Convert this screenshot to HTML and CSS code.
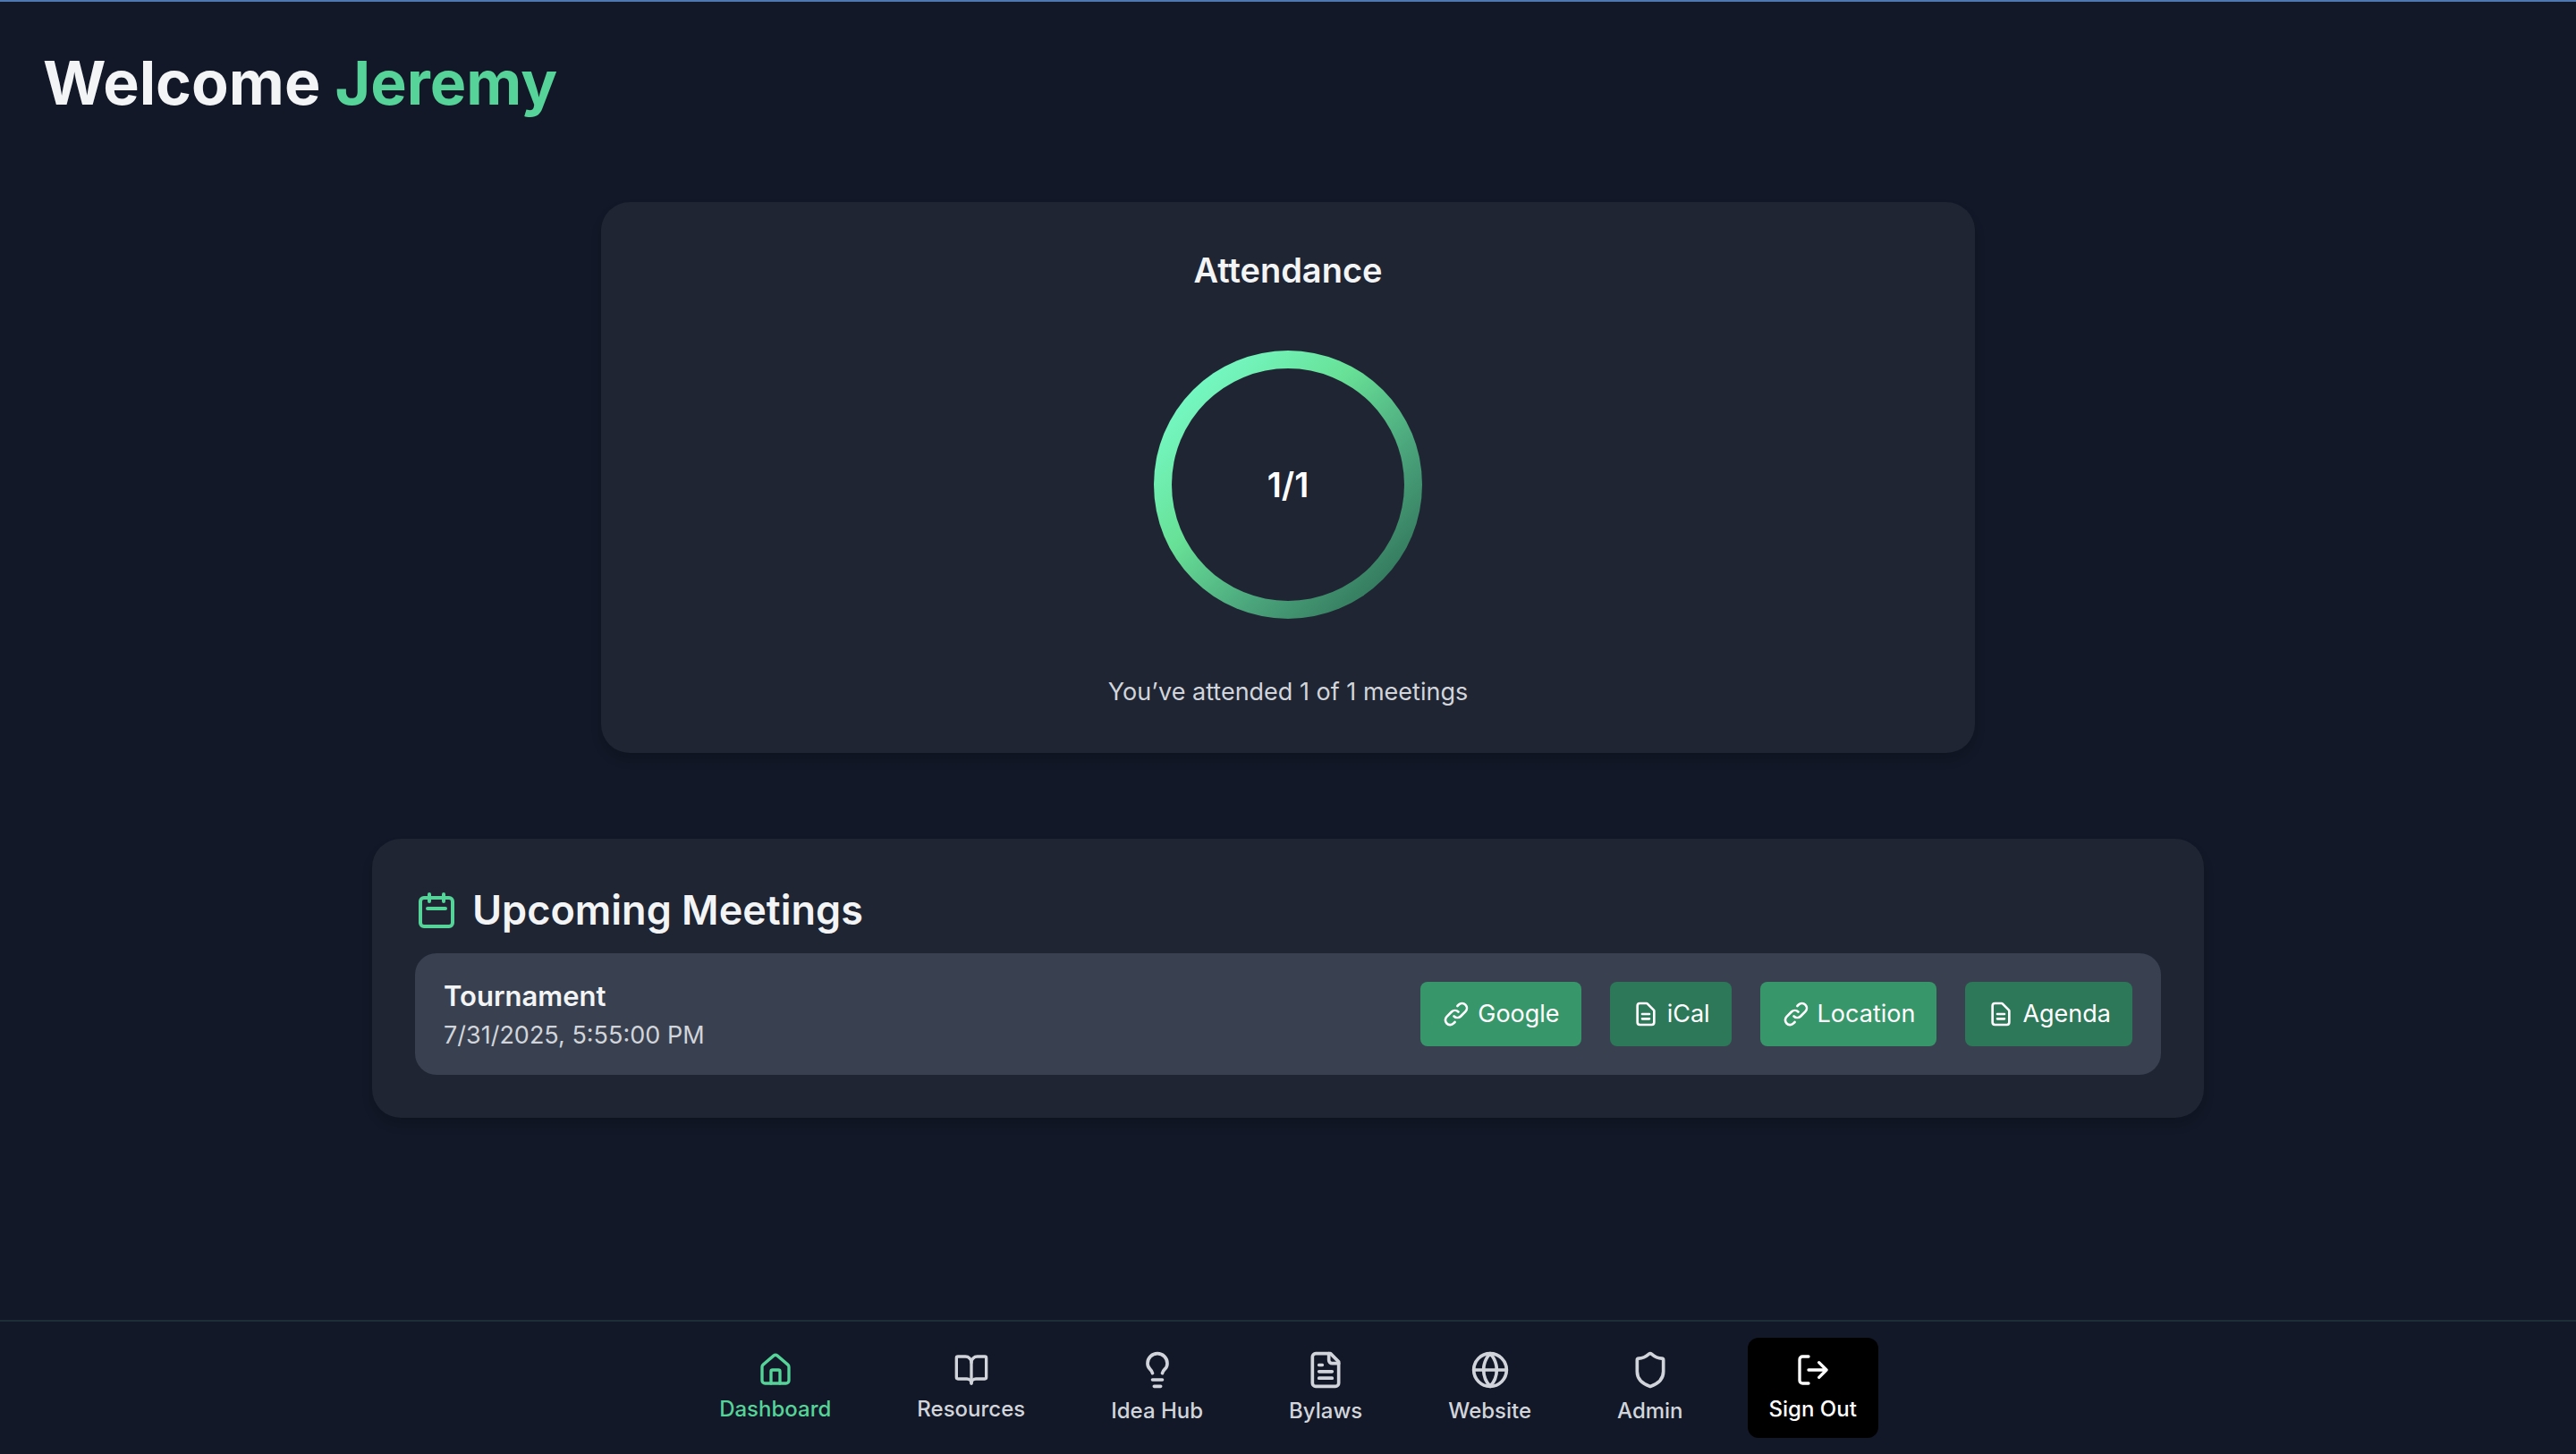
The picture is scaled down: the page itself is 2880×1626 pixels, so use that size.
FILE: index.html
```html
<!DOCTYPE html>
<html lang="en">
<head>
<meta charset="utf-8">
<title>Dashboard</title>
<link rel="stylesheet" href="styles.css">
</head>
<body>
<svg class="sprite" aria-hidden="true">
  <symbol id="link" viewBox="0 0 24 24"><path d="M13.828 10.172a4 4 0 0 0-5.656 0l-4 4a4 4 0 1 0 5.656 5.656l1.102-1.101m-.758-4.899a4 4 0 0 0 5.656 0l4-4a4 4 0 0 0-5.656-5.656l-1.100 1.100"/></symbol>
  <symbol id="doc" viewBox="0 0 24 24"><path d="M9 12h6m-6 4h6m2 5H7a2 2 0 0 1-2-2V5a2 2 0 0 1 2-2h5.586a1 1 0 0 1 .707.293l5.414 5.414a1 1 0 0 1 .293.707V19a2 2 0 0 1-2 2z"/></symbol>
</svg>
<main class="page">
  <h1 class="welcome">Welcome <span class="name">Jeremy</span></h1>

  <section class="card attendance">
    <h2 class="attendance-title">Attendance</h2>
    <div class="ring"><span class="ring-value">1/1</span></div>
    <p class="attendance-note">You’ve attended 1 of 1 meetings</p>
  </section>

  <section class="card meetings">
    <h2 class="meetings-title">
      <svg class="icon calendar" viewBox="0 0 24 24"><path d="M8 7V3m8 4V3m-9 8h10M5 21h14a2 2 0 0 0 2-2V7a2 2 0 0 0-2-2H5a2 2 0 0 0-2 2v12a2 2 0 0 0 2 2z"/></svg>
      Upcoming Meetings
    </h2>
    <div class="meeting">
      <div class="meeting-info">
        <h3 class="meeting-name">Tournament</h3>
        <p class="meeting-date">7/31/2025, 5:55:00 PM</p>
      </div>
      <div class="actions">
        <a class="action" href="#"><svg class="icon small"><use href="#link"/></svg>Google</a>
        <a class="action dark" href="#"><svg class="icon small"><use href="#doc"/></svg>iCal</a>
        <a class="action" href="#"><svg class="icon small"><use href="#link"/></svg>Location</a>
        <a class="action dark" href="#"><svg class="icon small"><use href="#doc"/></svg>Agenda</a>
      </div>
    </div>
  </section>
</main>

<nav class="nav">
  <a class="nav-item active" href="#"><svg class="icon medium" viewBox="0 0 24 24"><path d="M15 21v-8a1 1 0 0 0-1-1h-4a1 1 0 0 0-1 1v8"/><path d="M3 10a2 2 0 0 1 .709-1.528l7-5.999a2 2 0 0 1 2.582 0l7 5.999A2 2 0 0 1 21 10v9a2 2 0 0 1-2 2H5a2 2 0 0 1-2-2z"/></svg>Dashboard</a>
  <a class="nav-item" href="#"><svg class="icon medium" viewBox="0 0 24 24"><path d="M12 7v14"/><path d="M3 18a1 1 0 0 1-1-1V4a1 1 0 0 1 1-1h5a4 4 0 0 1 4 4 4 4 0 0 1 4-4h5a1 1 0 0 1 1 1v13a1 1 0 0 1-1 1h-6a3 3 0 0 0-3 3 3 3 0 0 0-3-3z"/></svg>Resources</a>
  <a class="nav-item" href="#"><svg class="icon" viewBox="0 0 24 24"><path d="M15 14c.2-1 .7-1.700 1.500-2.500 1-.9 1.500-2.200 1.500-3.500A6 6 0 0 0 6 8c0 1 .2 2.200 1.500 3.500.7.700 1.300 1.500 1.500 2.500M9 18h6M10 22h4"/></svg>Idea Hub</a>
  <a class="nav-item" href="#"><svg class="icon" viewBox="0 0 24 24"><path d="M15 2H6a2 2 0 0 0-2 2v16a2 2 0 0 0 2 2h12a2 2 0 0 0 2-2V7z"/><path d="M14 2v4a2 2 0 0 0 2 2h4M10 9H8M16 13H8M16 17H8"/></svg>Bylaws</a>
  <a class="nav-item" href="#"><svg class="icon" viewBox="0 0 24 24"><circle cx="12" cy="12" r="10"/><path d="M12 2a14.500 14.500 0 0 0 0 20 14.500 14.500 0 0 0 0-20M2 12h20"/></svg>Website</a>
  <a class="nav-item" href="#"><svg class="icon" viewBox="0 0 24 24"><path d="M20 13c0 5-3.500 7.500-7.660 8.950a1 1 0 0 1-.67-.01C7.500 20.500 4 18 4 13V6a1 1 0 0 1 1-1c2 0 4.500-1.200 6.240-2.720a1.170 1.170 0 0 1 1.520 0C14.510 3.810 17 5 19 5a1 1 0 0 1 1 1z"/></svg>Admin</a>
  <button class="nav-item sign-out" type="button"><svg class="icon medium" viewBox="0 0 24 24"><path d="M9 21H5a2 2 0 0 1-2-2V5a2 2 0 0 1 2-2h4M16 17l5-5-5-5M21 12H9"/></svg>Sign Out</button>
</nav>
</body>
</html>
```
FILE: styles.css
```css
* { box-sizing: border-box; margin: 0; }
body {
  min-height: 100vh;
  display: flex;
  flex-direction: column;
  background: #121827;
  border-top: 2px solid #4f77b0;
  color: #f3f4f6;
  font-family: Inter, "Liberation Sans", sans-serif;
}
a { color: inherit; text-decoration: none; }
.sprite { display: none; }
.icon {
  width: 44px;
  height: 44px;
  flex: none;
  fill: none;
  stroke: currentColor;
  stroke-width: 2;
  stroke-linecap: round;
  stroke-linejoin: round;
}
.icon.small { width: 32px; height: 32px; }
.icon.medium { width: 40px; height: 40px; }
.icon.calendar { width: 48px; height: 48px; color: #56d398; }

.page { flex: 1; display: flex; flex-direction: column; padding: 48px; }
.welcome { font-size: 68px; line-height: 84px; font-weight: 700; }
.name { color: #56d398; }

.card {
  width: 100%;
  align-self: center;
  padding: 48px;
  background: #1f2533;
  border-radius: 32px;
  box-shadow: 0 8px 12px rgba(0, 0, 0, .15);
}
.attendance {
  max-width: 1536px;
  margin-top: 92px;
  display: flex;
  flex-direction: column;
  align-items: center;
  gap: 62px;
}
.attendance-title { font-size: 38px; line-height: 56px; font-weight: 600; }
.ring {
  width: 300px;
  height: 300px;
  border-radius: 50%;
  border: 20px solid transparent;
  display: grid;
  place-items: center;
  background:
    linear-gradient(#1f2533, #1f2533) padding-box,
    linear-gradient(135deg, #76fbc9 10%, #68e197 40%, #4ba57c 65%, #31745a 90%) border-box;
}
.ring-value { color: #fff; font-size: 38px; line-height: 56px; font-weight: 600; }
.attendance-note { color: #d1d5db; font-size: 27px; line-height: 40px; }

.meetings { max-width: 2048px; margin-top: 96px; }
.meetings-title {
  display: flex;
  align-items: center;
  gap: 16px;
  margin-bottom: 16px;
  font-size: 45px;
  line-height: 64px;
  font-weight: 600;
}
.meeting {
  display: flex;
  align-items: center;
  justify-content: space-between;
  padding: 24px 32px;
  background: #394150;
  border-radius: 24px;
}
.meeting-name { font-size: 31px; line-height: 48px; font-weight: 600; }
.meeting-date { color: #d1d5db; font-size: 27px; line-height: 40px; }
.actions { display: flex; gap: 32px; }
.action {
  display: flex;
  align-items: center;
  gap: 8px;
  padding: 16px 24px;
  border-radius: 8px;
  background: #38976a;
  color: #fff;
  font-size: 27px;
  line-height: 40px;
}
.action.dark { background: #2c7858; }

.nav {
  display: flex;
  justify-content: center;
  align-items: center;
  gap: 48px;
  padding: 16px 0;
  border-top: 2px solid #1c2f37;
}
.nav-item {
  display: flex;
  flex-direction: column;
  align-items: center;
  gap: 8px;
  padding: 16px 24px;
  border: 0;
  border-radius: 12px;
  color: #d1d5db;
  font: 500 24px/32px Inter, "Liberation Sans", sans-serif;
}
.nav-item.active { color: #56d398; }
.nav-item.sign-out { background: #000; color: #fff; }
```
